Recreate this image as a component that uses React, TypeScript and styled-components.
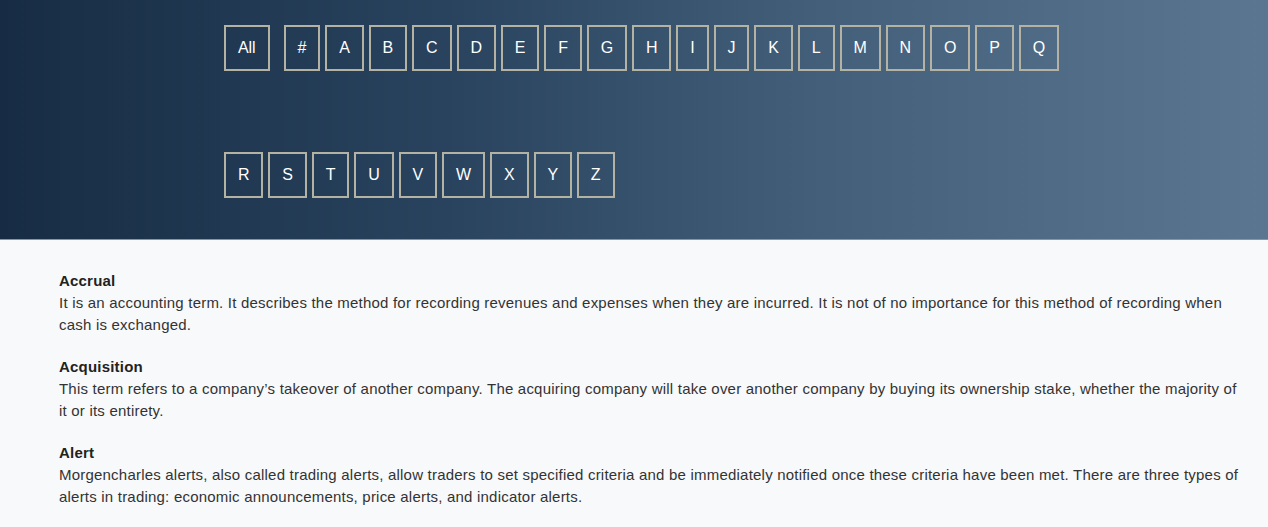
import React from "react";
import styled, { createGlobalStyle } from "styled-components";

const Global = createGlobalStyle`
  html, body { margin: 0; padding: 0; background: #f8f9fb; }
  body { font-family: "Liberation Sans", Arial, Helvetica, sans-serif; }
`;

const Hero = styled.header`
  height: 240px;
  box-sizing: border-box;
  background: linear-gradient(90deg, #172c44 0%, #29435e 35%, #435f7a 65%, #5a7690 100%);
  padding: 25px 0 0 224px;
  border-bottom: 1px solid #7f98ae;
`;

const LetterBar = styled.nav`
  width: 850px;
  display: flex;
  flex-wrap: wrap;
  column-gap: 5px;
  row-gap: 81px;
`;

const LetterButton = styled.button<{ $wide?: boolean }>`
  height: 46px;
  box-sizing: border-box;
  padding: 0 11.9px;
  margin-right: ${(p) => (p.$wide ? "9px" : "0")};
  background: transparent;
  border: 2px solid #b4b3a3;
  color: #ffffff;
  font-family: "Liberation Sans", Arial, Helvetica, sans-serif;
  font-size: 16px;
  line-height: 1;
  cursor: pointer;
`;

const Glossary = styled.main`
  padding: 30px 24px 20px 59px;
  color: #333333;
`;

const Entry = styled.section`
  margin-bottom: 20px;
`;

const Term = styled.h3`
  margin: 0;
  font-size: 15px;
  line-height: 22px;
  font-weight: 700;
  letter-spacing: 0.2px;
  color: #222222;
`;

const Definition = styled.p`
  margin: 0;
  font-size: 15px;
  line-height: 22px;
  letter-spacing: 0.21px;
  color: #333333;
`;

const letters = ["All", "#", ..."ABCDEFGHIJKLMNOPQRSTUVWXYZ".split("")];

const entries = [
  {
    term: "Accrual",
    text: "It is an accounting term. It describes the method for recording revenues and expenses when they are incurred. It is not of no importance for this method of recording when cash is exchanged.",
  },
  {
    term: "Acquisition",
    text: "This term refers to a company\u2019s takeover of another company. The acquiring company will take over another company by buying its ownership stake, whether the majority of it or its entirety.",
  },
  {
    term: "Alert",
    text: "Morgencharles alerts, also called trading alerts, allow traders to set specified criteria and be immediately notified once these criteria have been met. There are three types of alerts in trading: economic announcements, price alerts, and indicator alerts.",
  },
];

export default function App() {
  return (
    <>
      <Global />
      <Hero>
        <LetterBar>
          {letters.map((l) => (
            <LetterButton key={l} $wide={l === "All"}>
              {l}
            </LetterButton>
          ))}
        </LetterBar>
      </Hero>
      <Glossary>
        {entries.map((e) => (
          <Entry key={e.term}>
            <Term>{e.term}</Term>
            <Definition>{e.text}</Definition>
          </Entry>
        ))}
      </Glossary>
    </>
  );
}
